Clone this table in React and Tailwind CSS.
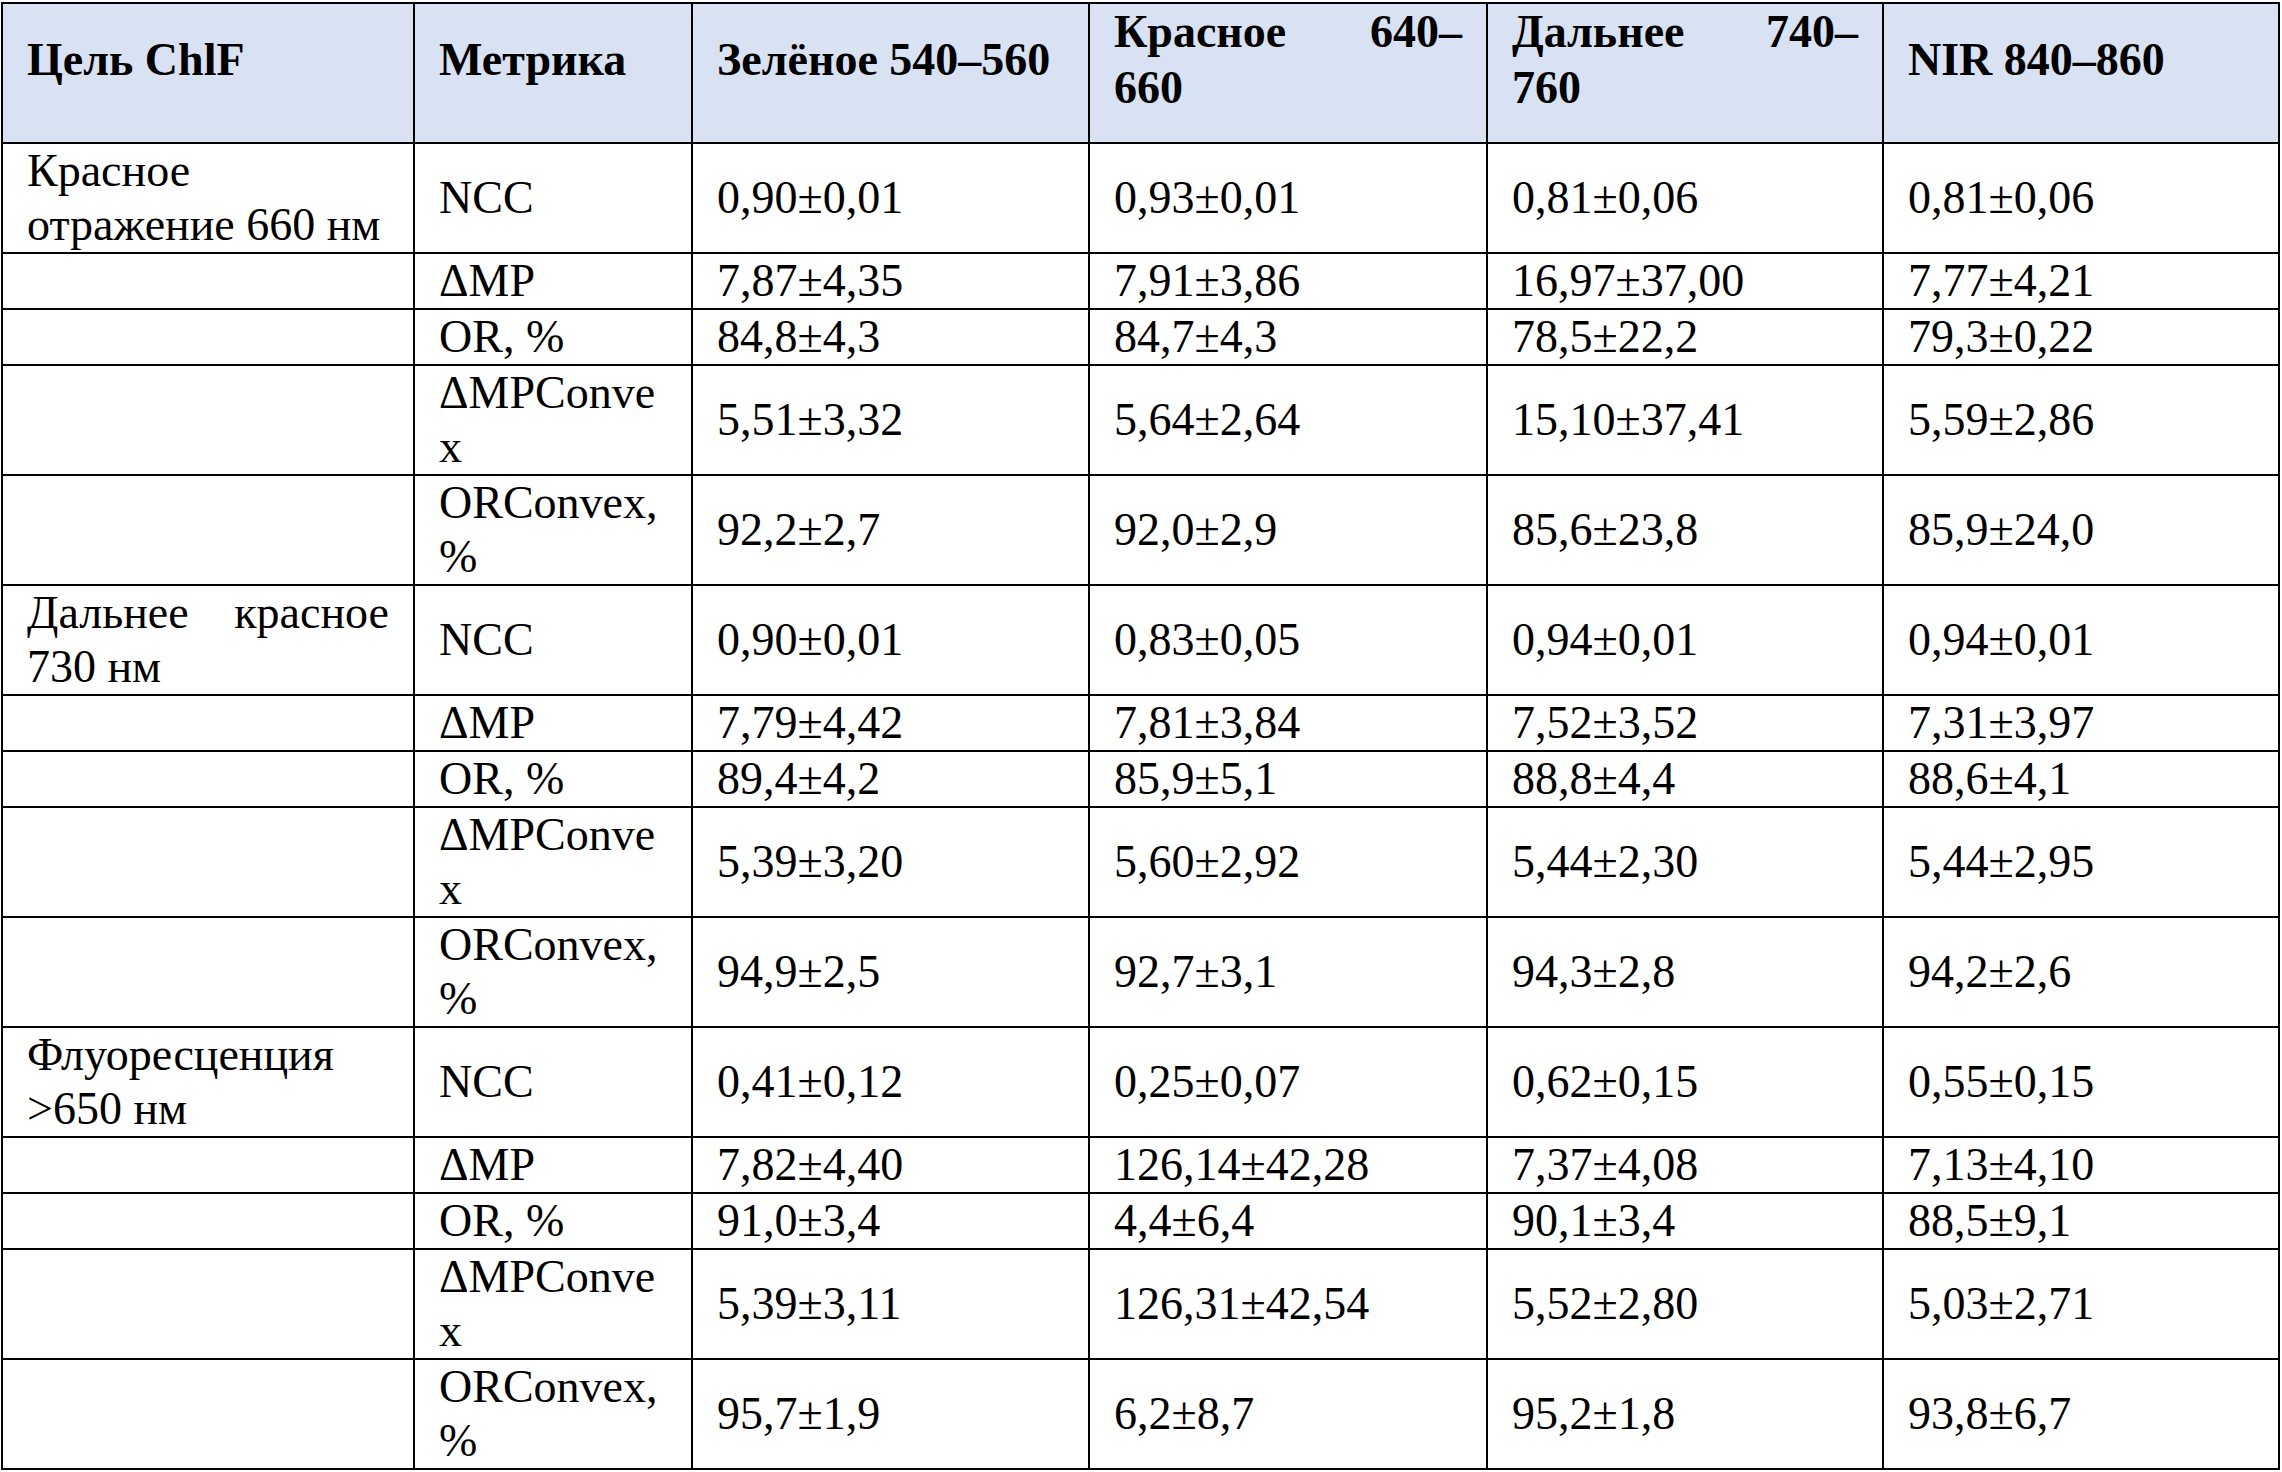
import React from 'react';

const headers = [
  { lines: ['Цель ChlF'] },
  { lines: ['Метрика'] },
  { lines: ['Зелёное 540–560'] },
  { lines: ['Красное 640–', '660'], justify: true },
  { lines: ['Дальнее 740–', '760'], justify: true },
  { lines: ['NIR 840–860'] },
];

const metrics = [
  { lines: ['NCC'] },
  { lines: ['ΔMP'] },
  { lines: ['OR, %'] },
  { lines: ['ΔMPConve', 'x'] },
  { lines: ['ORConvex,', '%'] },
];

const groups = [
  {
    target: ['Красное', 'отражение 660 нм'],
    rows: [
      ['0,90±0,01', '0,93±0,01', '0,81±0,06', '0,81±0,06'],
      ['7,87±4,35', '7,91±3,86', '16,97±37,00', '7,77±4,21'],
      ['84,8±4,3', '84,7±4,3', '78,5±22,2', '79,3±0,22'],
      ['5,51±3,32', '5,64±2,64', '15,10±37,41', '5,59±2,86'],
      ['92,2±2,7', '92,0±2,9', '85,6±23,8', '85,9±24,0'],
    ],
  },
  {
    target: ['Дальнее красное', '730 нм'],
    justify: true,
    rows: [
      ['0,90±0,01', '0,83±0,05', '0,94±0,01', '0,94±0,01'],
      ['7,79±4,42', '7,81±3,84', '7,52±3,52', '7,31±3,97'],
      ['89,4±4,2', '85,9±5,1', '88,8±4,4', '88,6±4,1'],
      ['5,39±3,20', '5,60±2,92', '5,44±2,30', '5,44±2,95'],
      ['94,9±2,5', '92,7±3,1', '94,3±2,8', '94,2±2,6'],
    ],
  },
  {
    target: ['Флуоресценция', '>650 нм'],
    rows: [
      ['0,41±0,12', '0,25±0,07', '0,62±0,15', '0,55±0,15'],
      ['7,82±4,40', '126,14±42,28', '7,37±4,08', '7,13±4,10'],
      ['91,0±3,4', '4,4±6,4', '90,1±3,4', '88,5±9,1'],
      ['5,39±3,11', '126,31±42,54', '5,52±2,80', '5,03±2,71'],
      ['95,7±1,9', '6,2±8,7', '95,2±1,8', '93,8±6,7'],
    ],
  },
];

// first line of a wrapped cell is stretched edge to edge, like Word's justify
const Lines = ({ lines, justify }) => (
  <>
    {lines.map((line, i) => (
      <span
        key={i}
        className={
          justify && i === 0 && lines.length > 1
            ? 'block whitespace-nowrap [text-align-last:justify]'
            : 'block whitespace-nowrap'
        }
      >
        {line}
      </span>
    ))}
  </>
);

const cell = 'border-2 border-black px-[24px] align-middle text-left';

const App = () => {
  return (
    <div className="min-h-screen bg-white pt-[2px] pl-[1px] font-['Liberation_Serif','Times_New_Roman',serif] text-black">
      <table className="table-fixed border-collapse w-[2277px] text-[46px] leading-[54px]">
        <colgroup>
          <col className="w-[412px]" />
          <col className="w-[278px]" />
          <col className="w-[397px]" />
          <col className="w-[398px]" />
          <col className="w-[396px]" />
          <col className="w-[396px]" />
        </colgroup>
        <thead>
          <tr className="h-[140px] bg-[#d9e2f3]">
            {headers.map((h, i) => (
              <th key={i} className={`${cell} font-bold leading-[56px]`}>
                <div className="pb-[26px]">
                  <Lines lines={h.lines} justify={h.justify} />
                </div>
              </th>
            ))}
          </tr>
        </thead>
        <tbody>
          {groups.map((group, g) =>
            group.rows.map((values, r) => (
              <tr key={`${g}-${r}`}>
                <td className={cell}>
                  {r === 0 && <Lines lines={group.target} justify={group.justify} />}
                </td>
                <td className={cell}>
                  <Lines lines={metrics[r].lines} />
                </td>
                {values.map((v, k) => (
                  <td key={k} className={cell}>
                    {v}
                  </td>
                ))}
              </tr>
            ))
          )}
        </tbody>
      </table>
    </div>
  );
};

export default App;
